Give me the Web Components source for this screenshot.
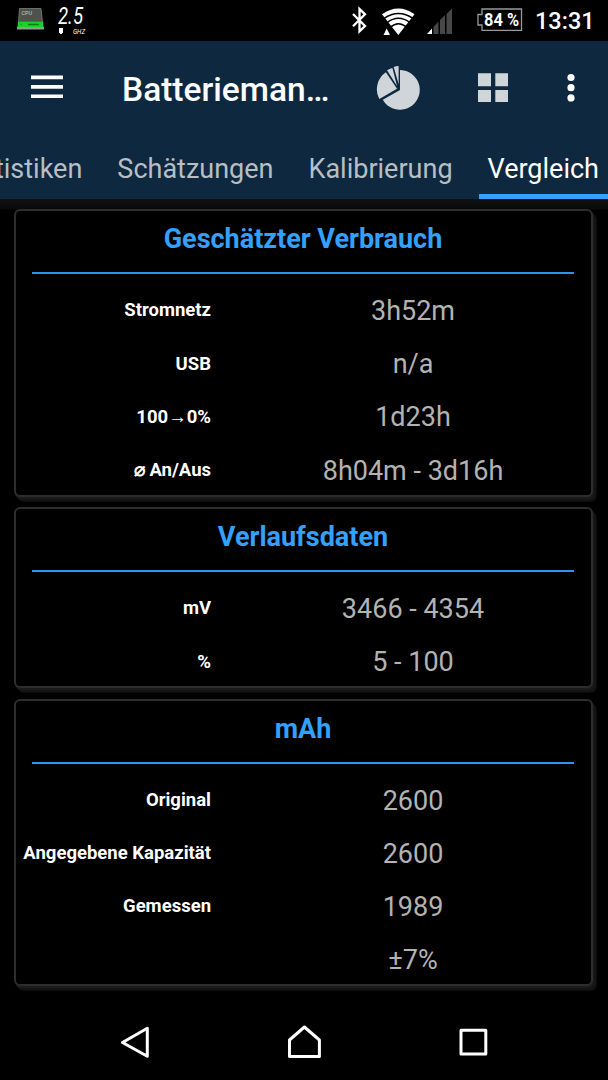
<!DOCTYPE html>
<html lang="de">
<head>
<meta charset="utf-8">
<title>Batteriemanager</title>
<style>
  body {
    margin: 0;
    background: #000;
    font-family: Roboto, "Noto Sans", sans-serif;
    overflow: hidden;
  }
</style>
</head>
<body>
<battery-app></battery-app>

<script>
class StatusBar extends HTMLElement {
  constructor() {
    super();
    this.attachShadow({ mode: "open" }).innerHTML = `
      <style>
        :host {
          display: flex;
          height: 41px;
          box-sizing: border-box;
          padding: 0 14px 0 16px;
          justify-content: space-between;
          background: #000;
          color: #fff;
        }
        .group { display: flex; }
        svg { display: block; flex: none; }
        .ghz { margin-left: 12px; }
        .wifi { margin-left: 14px; }
        .signal { margin-left: 12px; }
        .battery { margin-left: 24px; }
        time {
          width: 59px;
          margin-left: 12px;
          font-size: 23.500px;
          font-weight: 500;
          line-height: 43px;
          white-space: nowrap;
        }
      </style>
      <div class="group">
        <svg width="29" height="41" viewBox="0 0 29 41">
          <path d="M3.500 8.500h21.500l1.500 13.500H2.500z" fill="#4d534d" stroke="#7b837b" stroke-width=".8"/>
          <path d="M2 22h25l.5 5H1.500z" fill="#16d42c"/>
          <path d="M1 27h27v2.500H1z" fill="#8aa08a"/>
          <path d="M4.500 24.500h1M12 24.500h11" stroke="#087a18" stroke-width="1.500"/>
          <text x="5.500" y="14.500" font-family="Roboto" font-size="5.500" fill="#c5cac5">CPU</text>
        </svg>
        <svg class="ghz" width="32" height="41" viewBox="0 0 32 41">
          <g fill="#fff" font-family="Roboto" font-style="italic">
            <text x="1" y="24" font-size="24" textLength="25" lengthAdjust="spacingAndGlyphs">2.5</text>
            <text x="16" y="34" font-size="8" textLength="12" lengthAdjust="spacingAndGlyphs">GHZ</text>
          </g>
          <path d="M2 28h4v5H5v1H3v-1H2z" fill="#fff"/>
        </svg>
      </div>
      <div class="group">
        <svg width="16" height="41" viewBox="0 0 16 41">
          <path d="M1 14l12 12L7.500 31.300V9l5.500 5.300-12 12" fill="none" stroke="#fff" stroke-width="2.300"/>
        </svg>
        <svg class="wifi" width="33" height="41" viewBox="0 0 33 41">
          <path d="M0 14.300Q16.500 2.500 32.500 14.300L16.300 35z" fill="#fff"/>
          <g fill="none" stroke="#000" stroke-width="1.500">
            <path d="M2 18.300Q16.500 8.500 31 18.300"/>
            <path d="M5 22.700Q16.500 14 28 22.700"/>
            <path d="M8 27.500Q16.500 20 25 27.500"/>
          </g>
          <path d="M0 35.500l4.700-8.500 4.800 8.500z" fill="#000"/>
          <path d="M1.500 35l3.200-6.500L8 35z" fill="#fff"/>
        </svg>
        <svg class="signal" width="26" height="41" viewBox="0 0 26 41">
          <path d="M0 34l5-5.500V34z" fill="#fff"/>
          <path d="M6.500 27l5-5.500V34h-5zM13 20l5-5V34h-5zM19.500 14l5.500-5.500V34h-5.500z" fill="#474747"/>
        </svg>
        <svg class="battery" width="46" height="41" viewBox="0 0 46 41">
          <path d="M5 9h39.500v21.300H5V25H1V14.500h4z" fill="none" stroke="#999" stroke-width="1.300"/>
          <text x="7" y="26" font-family="Roboto" font-weight="700" font-size="18" textLength="35" lengthAdjust="spacingAndGlyphs" fill="#fff">84 %</text>
        </svg>
        <time>13:31</time>
      </div>
    `;
  }
}

class AppBar extends HTMLElement {
  constructor() {
    super();
    this.attachShadow({ mode: "open" }).innerHTML = `
      <style>
        :host {
          display: flex;
          height: 96px;
          align-items: center;
          padding-left: 31px;
          background: #0e293f;
          color: #fff;
        }
        svg { display: block; flex: none; }
        h1 {
          width: 208px;
          margin: 2px 0 0 59px;
          font-size: 33.500px;
          line-height: 40px;
          font-weight: 500;
          white-space: nowrap;
        }
        .chart { margin-left: 46px; }
        .grid, .more { margin-left: 58px; }
      </style>
      <svg width="32" height="96" viewBox="0 0 32 96">
        <path d="M0 36.400h32M0 45.900h32M0 55.200h32" stroke="#fff" stroke-width="3.600"/>
      </svg>
      <h1><slot></slot></h1>
      <svg class="chart" width="44" height="96" viewBox="0 0 44 96" fill="#d0d5d9">
        <path d="M24 29.100A19.800 19.800 0 1 1 6.800 58.800L24 49z"/>
        <path d="M21 47.800L3.300 58A20.500 20.500 0 0 1 9.900 31.300z"/>
        <path d="M21 45L11 29.300Q13.700 27.600 16.400 26.900z"/>
        <path d="M22.600 43L17.700 25.900Q20 25 22.600 24.900z"/>
      </svg>
      <svg class="grid" width="30" height="96" viewBox="0 0 30 96" fill="#d0d5d9">
        <path d="M0 32.200h13v13H0zM17.300 32.200h13v13h-13zM0 49h13v12H0zM17.300 49h13v12h-13z"/>
      </svg>
      <svg class="more" width="10" height="96" viewBox="0 0 10 96" fill="#fff">
        <circle cx="5" cy="36.500" r="3.600"/>
        <circle cx="5" cy="46.700" r="3.600"/>
        <circle cx="5" cy="56.900" r="3.600"/>
      </svg>
    `;
  }
}

class TabStrip extends HTMLElement {
  constructor() {
    super();
    this.attachShadow({ mode: "open" }).innerHTML = `
      <style>
        :host {
          display: flex;
          height: 62px;
          justify-content: flex-end;
          gap: 17px;
          overflow: hidden;
          background: #0e293f;
        }
        ::slotted(span) {
          flex: none;
          box-sizing: border-box;
          padding: 0 9px;
          font-size: 27px;
          line-height: 65px;
          height: 62px;
          color: #b7bfc5;
        }
        ::slotted(.active) {
          color: #fff;
          background: linear-gradient(#33a1fd, #33a1fd) bottom / 100% 5px no-repeat;
        }
      </style>
      <slot></slot>
    `;
  }
}

class StatCard extends HTMLElement {
  constructor() {
    super();
    this.attachShadow({ mode: "open" }).innerHTML = `
      <style>
        :host {
          display: block;
          box-sizing: border-box;
          padding-bottom: 0.100px;
          border: 2px solid #2d2d2d;
          border-radius: 6px;
          background: #000;
          box-shadow: 1px 2px 0 #1b1b1b, 3px 4px 0 #141414, 4px 5px 1px #0d0d0d;
        }
        h2 {
          height: 61px;
          margin: 0 17px 9.500px 16px;
          border-bottom: 2px solid #2b96ec;
          font-size: 27px;
          line-height: 57px;
          font-weight: 700;
          text-align: center;
          color: #33a1fd;
        }
        .rows {
          margin-bottom: -2px;
        }
      </style>
      <h2></h2>
      <div class="rows"><slot></slot></div>
    `;
  }

  connectedCallback() {
    this.shadowRoot.querySelector("h2").textContent = this.getAttribute("heading");
  }
}

class StatRow extends HTMLElement {
  constructor() {
    super();
    this.attachShadow({ mode: "open" }).innerHTML = `
      <style>
        :host {
          display: grid;
          grid-template-columns: 195px 1fr;
          height: 53.200px;
          align-items: center;
        }
        .label {
          text-align: right;
          font-size: 18.500px;
          line-height: 22px;
          font-weight: 700;
          color: #fff;
          white-space: nowrap;
        }
        .value {
          margin-left: 24px;
          padding-top: 1.200px;
          text-align: center;
          font-size: 27px;
          line-height: 32px;
          color: #b3b3b3;
        }
      </style>
      <span class="label"></span>
      <span class="value"><slot></slot></span>
    `;
  }

  connectedCallback() {
    this.shadowRoot.querySelector(".label").textContent = this.getAttribute("label") || "";
  }
}

class NavBar extends HTMLElement {
  constructor() {
    super();
    this.attachShadow({ mode: "open" }).innerHTML = `
      <style>
        :host {
          display: flex;
          height: 76px;
          padding: 0 118px 0 119px;
          justify-content: space-between;
          align-items: center;
        }
        svg {
          fill: none;
          stroke: #fff;
          stroke-width: 3;
          stroke-linejoin: round;
        }
      </style>
      <svg width="32" height="36" viewBox="0 0 32 36"><path d="M28.300 4.300v28L3.500 18.500z"/></svg>
      <svg width="36" height="36" viewBox="0 0 36 36"><path d="M2.500 16L17.400 3l15 13v16.500H2.500z"/></svg>
      <svg width="32" height="36" viewBox="0 0 32 36"><path d="M3 6.300h24.800v23.600H3z"/></svg>
    `;
  }
}

class BatteryApp extends HTMLElement {
  constructor() {
    super();
    this.attachShadow({ mode: "open" }).innerHTML = `
      <style>
        :host {
          display: flex;
          flex-direction: column;
          width: 608px;
          height: 1080px;
          overflow: hidden;
        }
        main {
          flex: 1;
          display: flex;
          flex-direction: column;
          gap: 10.700px;
          padding: 10.300px 15px 0 14px;
          background: linear-gradient(#101111, #080909 10px, #000 11px);
        }
      </style>
      <status-bar></status-bar>
      <app-bar>Batterieman…</app-bar>
      <tab-strip>
        <span>Statistiken</span>
        <span>Schätzungen</span>
        <span>Kalibrierung</span>
        <span class="active">Vergleich</span>
      </tab-strip>
      <main>
        <stat-card heading="Geschätzter Verbrauch">
          <stat-row label="Stromnetz">3h52m</stat-row>
          <stat-row label="USB">n/a</stat-row>
          <stat-row label="100→0%">1d23h</stat-row>
          <stat-row label="⌀ An/Aus">8h04m - 3d16h</stat-row>
        </stat-card>
        <stat-card heading="Verlaufsdaten">
          <stat-row label="mV">3466 - 4354</stat-row>
          <stat-row label="%">5 - 100</stat-row>
        </stat-card>
        <stat-card heading="mAh">
          <stat-row label="Original">2600</stat-row>
          <stat-row label="Angegebene Kapazität">2600</stat-row>
          <stat-row label="Gemessen">1989</stat-row>
          <stat-row>±7%</stat-row>
        </stat-card>
      </main>
      <nav-bar></nav-bar>
    `;
  }
}

customElements.define("status-bar", StatusBar);
customElements.define("app-bar", AppBar);
customElements.define("tab-strip", TabStrip);
customElements.define("stat-card", StatCard);
customElements.define("stat-row", StatRow);
customElements.define("nav-bar", NavBar);
customElements.define("battery-app", BatteryApp);
</script>
</body>
</html>
